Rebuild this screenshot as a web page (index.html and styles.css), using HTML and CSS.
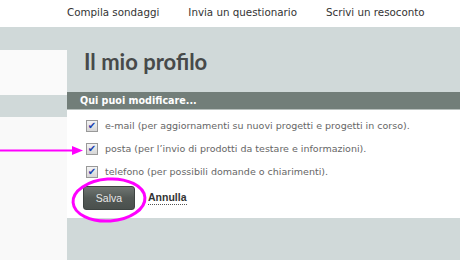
FILE: index.html
```html
<!DOCTYPE html>
<html lang="it">
<head>
    <meta charset="UTF-8">
    <title>Il mio profilo</title>
    <link rel="stylesheet" href="styles.css">
</head>
<body>
    <div class="topnav">
        <a href="#">Compila sondaggi</a>
        <a href="#">Invia un questionario</a>
        <a href="#">Scrivi un resoconto</a>
    </div>

    <div class="page">
        <div class="sidebar">
            <div class="side-box"></div>
            <div class="side-gap"></div>
            <div class="side-rest"></div>
        </div>

        <div class="main">
            <h1>Il mio profilo</h1>
            <div class="bar">Qui puoi modificare...</div>
            <div class="panel">
                <label class="check"><span class="box">&#10004;</span>e-mail (per aggiornamenti su nuovi progetti e progetti in corso).</label>
                <label class="check"><span class="box">&#10004;</span>posta (per l’invio di prodotti da testare e informazioni).</label>
                <label class="check"><span class="box">&#10004;</span>telefono (per possibili domande o chiarimenti).</label>
                <div class="actions">
                    <button class="btn">Salva</button>
                    <a href="#" class="cancel">Annulla</a>
                </div>
            </div>
        </div>
    </div>

    <!-- annotazioni -->
    <svg class="marks" width="460" height="260" viewBox="0 0 460 260">
        <line x1="0" y1="150.5" x2="74" y2="150.5" stroke="#ff00ff" stroke-width="2"/>
        <polygon points="83,150.5 72,146 72,155" fill="#ff00ff"/>
        <ellipse cx="109" cy="200" rx="36" ry="21" fill="none" stroke="#ff00ff" stroke-width="3" transform="rotate(-4 109 200)"/>
    </svg>
</body>
</html>
```

FILE: styles.css
```css
body {
    margin: 0;
    font-family: "DejaVu Sans", Verdana, sans-serif;
    background-color: #d0d9d9;
    position: relative;
    width: 460px;
    height: 260px;
    overflow: hidden;
}
.topnav {
    height: 27px;
    background-color: #fff;
    display: flex;
    gap: 29px;
    padding-left: 67px;
    align-items: center;
    box-sizing: border-box;
    padding-bottom: 3px;
}
.topnav a {
    color: #333;
    text-decoration: none;
    font-size: 10.3px;
}
.page {
    display: flex;
    height: 233px;
}
.sidebar {
    width: 67px;
    display: flex;
    flex-direction: column;
    padding-top: 23px;
}
.side-box {
    height: 45px;
    background-color: #fafafa;
}
.side-gap {
    height: 22px;
}
.side-rest {
    flex: 1;
    background-color: #f9f9f9;
}
.main {
    flex: 1;
}
h1 {
    margin: 0;
    height: 65px;
    box-sizing: border-box;
    padding: 21px 0 0 17px;
    font-family: Lato, "Open Sans", sans-serif;
    font-size: 22px;
    font-weight: bold;
    color: #474a4a;
}
.bar {
    height: 17px;
    background-color: #727e79;
    border-bottom: 1px solid #b8c0bd;
    color: #fff;
    font-size: 9.6px;
    font-weight: bold;
    padding-left: 13px;
    line-height: 18px;
}
.panel {
    background-color: #fff;
    height: 108px;
    padding: 4px 0 0 19px;
    box-sizing: border-box;
}
.check {
    display: flex;
    align-items: center;
    height: 23px;
    font-size: 9.5px;
    color: #666;
}
.box {
    width: 10px;
    height: 10px;
    border: 1px solid #999;
    background: linear-gradient(#f4f4f4, #d6d6d6);
    color: #1a3fb0;
    font-size: 10px;
    line-height: 10px;
    text-align: center;
    margin-right: 7px;
}
.actions {
    display: flex;
    align-items: center;
    gap: 13px;
    margin-top: 3px;
    margin-left: -3px;
}
.btn {
    width: 52px;
    height: 24px;
    border: 1px solid #3e4442;
    border-radius: 3px;
    background: linear-gradient(#6f7672, #535956 50%, #4a504d);
    color: #e8e8e8;
    font-family: "Liberation Sans", sans-serif;
    font-size: 10.5px;
    padding: 0;
}
.cancel {
    color: #333;
    font-family: "Liberation Sans", sans-serif;
    font-size: 10.5px;
    font-weight: bold;
    text-decoration: none;
    border-bottom: 1px dotted #555;
    padding-bottom: 1px;
}
.marks {
    position: absolute;
    top: 0;
    left: 0;
    pointer-events: none;
}
```
